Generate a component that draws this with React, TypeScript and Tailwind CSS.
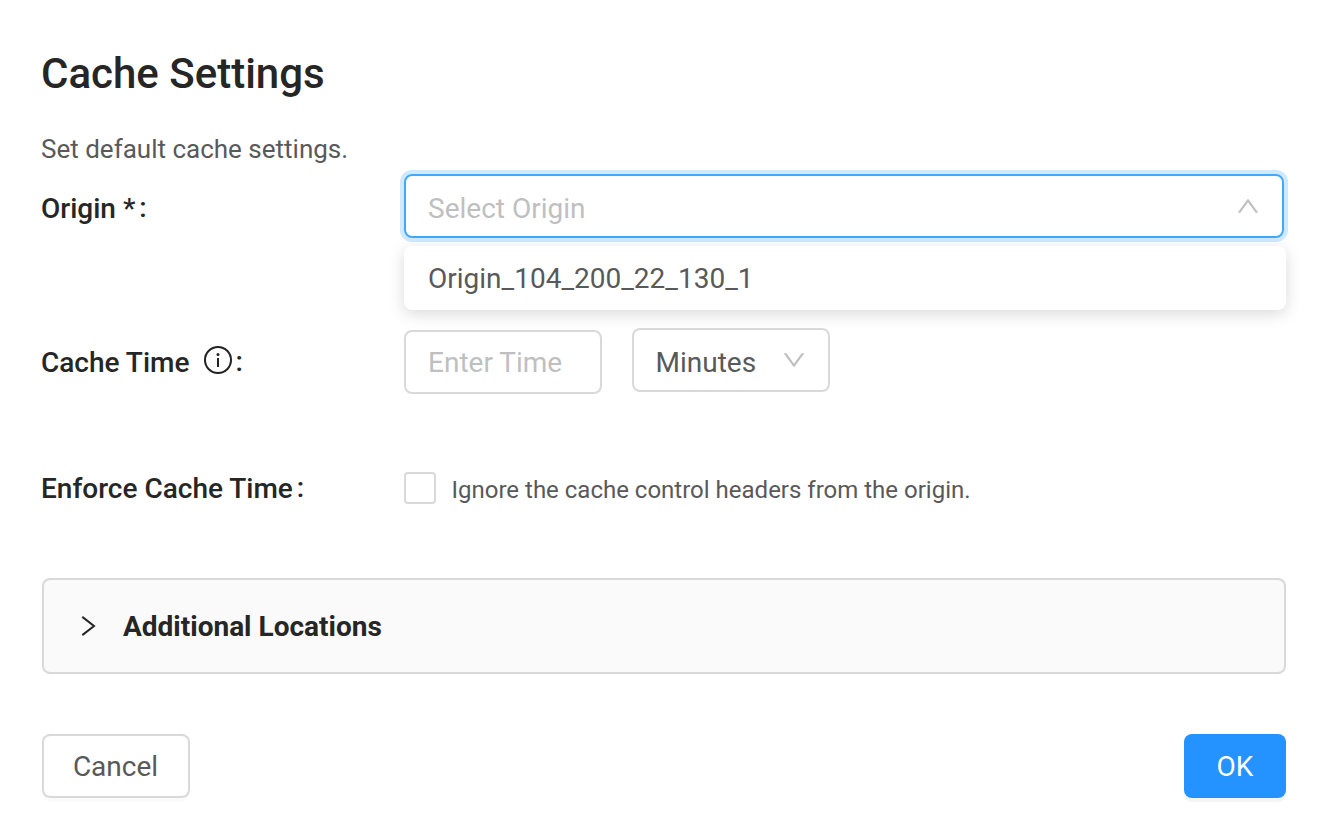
import React from "react";

const down = "M884 256h-75c-5.100 0-9.900 2.500-12.900 6.600L512 654.200 227.900 262.600c-3-4.100-7.800-6.600-12.900-6.600h-75c-6.500 0-10.300 7.400-6.500 12.700l352.600 486.100c12.800 17.600 39 17.600 51.700 0l352.600-486.100c3.900-5.300.1-12.700-6.400-12.700z";

function InfoIcon() {
  return (
    <svg viewBox="0 0 28 28" className="-mt-1.5 ml-[15px] size-7 fill-[#222]">
      <circle cx="14" cy="14" r="13" fill="none" stroke="#222" strokeWidth="2" />
      <circle cx="14" cy="8.500" r="1.500" />
      <rect x="13" y="12" width="2" height="9" />
    </svg>
  );
}

export default function App() {
  return (
    <main className="flex h-[840px] w-[1330px] flex-col bg-white pr-11 pl-[42px] font-['Roboto',sans-serif] text-[28px] leading-8 text-[#595959]">
      <h1 className="mt-[49px] -ml-px h-[50px] text-[42px] leading-[50px] font-medium whitespace-nowrap text-[#262626]">Cache Settings</h1>
      <p className="mt-[34px] -ml-px h-8 text-[26px]">Set default cache settings.</p>

      <div className="mt-[9px] flex h-16">
        <label className="-ml-px flex h-[70px] w-[363px] items-center font-medium text-[#262626]">Origin *<span className="-mt-0.5 ml-1">:</span></label>
        <div className="flex h-16 w-[880px] items-center justify-between rounded-lg border-2 border-[#40a9ff] pr-[22px] pl-[22px] pt-1.5 text-[#bfbfbf] shadow-[0_0_0_4px_rgba(24,144,255,0.2)]">
          Select Origin
          <svg viewBox="64 64 896 896" className="-mt-1.5 size-6 rotate-180 fill-[#bfbfbf]"><path d={down} /></svg>
        </div>
      </div>
      <div className="mt-2 ml-[362px] flex h-16 w-[882px] items-center rounded-lg pt-0.5 pl-6 shadow-[0_4px_16px_rgba(0,0,0,0.15)]">Origin_104_200_22_130_1</div>

      <div className="mt-[18px] flex h-[66px]">
        <label className="-ml-px flex h-[70px] w-[363px] items-center font-medium text-[#262626]">Cache Time<InfoIcon /><span className="-mt-0.5 ml-[3px]">:</span></label>
        <div className="mt-0.5 flex h-16 w-[198px] items-center rounded-lg border-2 border-[#d9d9d9] pt-0.5 pl-[22px] text-[#bfbfbf]">Enter Time</div>
        <div className="ml-[30px] flex h-16 w-[198px] items-center justify-between rounded-lg border-2 border-[#d9d9d9] pt-1.5 pr-[22px] pl-[21.500px]">
          Minutes
          <svg viewBox="64 64 896 896" className="-mt-1.5 size-6 fill-[#bfbfbf]"><path d={down} /></svg>
        </div>
      </div>

      <div className="mt-[78px] flex h-8 items-center">
        <label className="-ml-px flex w-[363px] pt-0.5 font-medium text-[#262626]">Enforce Cache Time<span className="-mt-px ml-1">:</span></label>
        <div className="size-8 rounded border-2 border-[#d9d9d9]" />
        <span className="mt-1 ml-[15.500px] text-[24px]">Ignore the cache control headers from the origin.</span>
      </div>

      <div className="mt-[74px] flex h-24 w-[1244px] items-center rounded-lg border-2 border-[#d9d9d9] bg-[#fafafa] pl-[32px] font-bold text-[#262626]">
        <svg viewBox="0 0 24 24" className="size-6" fill="none" stroke="#262626" strokeWidth="2"><path d="M6.300 2.900 18 12 6.300 21.100" /></svg>
        <span className="ml-[23px] pt-0.5">Additional Locations</span>
      </div>

      <div className="mt-[60px] flex h-16 w-[1244px] justify-between">
        <button className="h-16 w-[148px] rounded-lg border-2 border-[#d9d9d9] pt-0.5 pr-px shadow-[0_4px_0_rgba(0,0,0,0.016)]">Cancel</button>
        <button className="h-16 w-[102px] rounded-lg bg-[#2492ff] pt-0.5 text-white shadow-[0_4px_0_rgba(0,0,0,0.045)]">OK</button>
      </div>
    </main>
  );
}
